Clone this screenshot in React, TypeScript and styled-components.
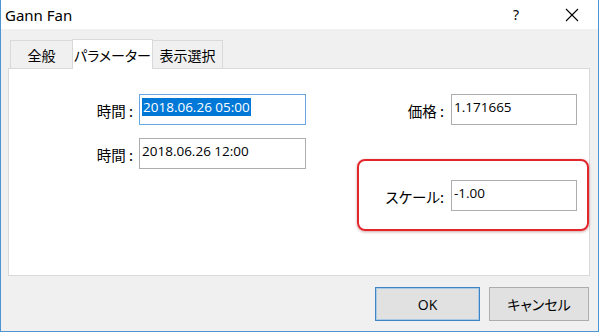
import React from 'react';
import styled, { createGlobalStyle } from 'styled-components';

const GlobalStyle = createGlobalStyle`
  html, body {
    margin: 0;
    padding: 0;
    background: #ffffff;
  }

  body {
    font-family: 'Noto Sans', 'Noto Sans CJK JP', sans-serif;
    color: #000;
  }
`;

// Styles
const Window = styled.div`
  box-sizing: border-box;
  width: 599px;
  height: 332px;
  border: 1px solid #4d94d4;
  border-top: none;
  background: #f0f0f0;
  display: flex;
  flex-direction: column;
`;

const TitleBar = styled.div`
  height: 29px;
  background: #fff;
  display: flex;
  align-items: center;
  padding-left: 4px;
  font-size: 15px;

  .title {
    flex: 1;
  }

  .help {
    width: 20px;
    margin-right: 36px;
    font-size: 14px;
    text-align: center;
  }

  .close {
    width: 20px;
    margin-right: 16px;
    display: flex;
    justify-content: center;
  }
`;

const Body = styled.div`
  padding: 10px 0 0 7px;
  display: flex;
  flex-direction: column;
`;

const TabStrip = styled.div`
  display: flex;
  align-items: flex-end;
  height: 29px;
  padding-left: 2px;
`;

const Tab = styled.div<{ $active?: boolean }>`
  box-sizing: border-box;
  height: ${(p) => (p.$active ? '30px' : '28px')};
  width: ${(p) => (p.$active ? '81px' : '71px')};
  display: flex;
  align-items: center;
  justify-content: center;
  font-family: 'Noto Sans CJK JP', sans-serif;
  font-feature-settings: 'palt';
  font-size: 14px;
  background: ${(p) => (p.$active ? '#fff' : '#f0f0f0')};
  border: 1px solid #d9d9d9;
  border-bottom: none;
  margin-bottom: ${(p) => (p.$active ? '-1px' : '0')};
  position: relative;
  z-index: ${(p) => (p.$active ? 1 : 0)};

  &:first-child {
    width: 63px;
  }

  & + & {
    margin-left: -1px;
  }
`;

const Panel = styled.div`
  box-sizing: border-box;
  width: 582px;
  height: 208px;
  background: #fff;
  border: 1px solid #d9d9d9;
  display: flex;
  padding-top: 25px;
`;

const LeftCol = styled.div`
  display: flex;
  flex-direction: column;
  gap: 13px;
`;

const RightCol = styled.div`
  width: 232px;
  margin-left: 51px;
  display: flex;
  flex-direction: column;
`;

const Field = styled.div<{ $labelWidth?: number }>`
  display: flex;
  align-items: center;
  justify-content: flex-end;
  gap: ${(p) => (p.$labelWidth ? '6px' : '7px')};

  .label {
    width: ${(p) => (p.$labelWidth ? `${p.$labelWidth}px` : 'auto')};
    text-align: right;
    font-family: 'Noto Sans CJK JP', sans-serif;
    font-feature-settings: 'palt';
    font-size: 14.5px;
    white-space: nowrap;
    margin-top: 2px;
  }
`;

const Input = styled.div<{ $width: number; $focused?: boolean }>`
  box-sizing: border-box;
  width: ${(p) => p.$width}px;
  height: 31px;
  border: 1px solid ${(p) => (p.$focused ? '#6aa6e0' : '#adadad')};
  background: #fff;
  padding: 2px 2px;
  font-family: 'Open Sans', 'Noto Sans', sans-serif;
  font-size: 13.5px;
  line-height: 20px;
  white-space: nowrap;

  .sel {
    background: #0078d7;
    color: #fff;
    padding: 0 1px;
  }
`;

const PriceRow = styled(Field)`
  padding-right: 12px;
`;

const Highlight = styled.div`
  box-sizing: border-box;
  margin-top: 34px;
  height: 72px;
  border: 2px solid #e3262b;
  border-radius: 8px;
  box-shadow: 0 1px 3px rgba(120, 0, 0, 0.35);
  display: flex;
  justify-content: flex-end;
  align-items: flex-start;
  padding: 19px 10px 0 0;
`;

const Footer = styled.div`
  display: flex;
  justify-content: flex-end;
  gap: 9px;
  padding: 11px 9px 0 0;
`;

const Button = styled.div<{ $default?: boolean }>`
  box-sizing: border-box;
  width: ${(p) => (p.$default ? '105px' : '100px')};
  height: 34px;
  display: flex;
  align-items: center;
  justify-content: center;
  background: #e1e1e1;
  border: 1px solid ${(p) => (p.$default ? '#3d85c6' : '#adadad')};
  box-shadow: ${(p) => (p.$default ? 'inset 0 0 0 1px #a9c9e6' : 'none')};
  font-family: 'Open Sans', 'Noto Sans CJK JP', sans-serif;
  font-feature-settings: 'palt';
  font-size: 14px;
`;

const App: React.FC = () => {
  return (
    <>
      <GlobalStyle />
      <Window>
        <TitleBar>
          <span className="title">Gann Fan</span>
          <span className="help">?</span>
          <span className="close">
            <svg width="14" height="14" viewBox="0 0 14 14">
              <path d="M1 1 L13 13 M13 1 L1 13" stroke="#000" strokeWidth="1.1" />
            </svg>
          </span>
        </TitleBar>
        <Body>
          <TabStrip>
            <Tab>全般</Tab>
            <Tab $active>パラメーター</Tab>
            <Tab>表示選択</Tab>
          </TabStrip>
          <Panel>
            <LeftCol>
              <Field $labelWidth={124}>
                <span className="label">時間 :</span>
                <Input $width={167} $focused>
                  <span className="sel">2018.06.26 05:00</span>
                </Input>
              </Field>
              <Field $labelWidth={124}>
                <span className="label">時間 :</span>
                <Input $width={167}>2018.06.26 12:00</Input>
              </Field>
            </LeftCol>
            <RightCol>
              <PriceRow>
                <span className="label">価格 :</span>
                <Input $width={126}>1.171665</Input>
              </PriceRow>
              <Highlight>
                <Field>
                  <span className="label">スケール:</span>
                  <Input $width={126}>-1.00</Input>
                </Field>
              </Highlight>
            </RightCol>
          </Panel>
          <Footer>
            <Button $default>OK</Button>
            <Button>キャンセル</Button>
          </Footer>
        </Body>
      </Window>
    </>
  );
};

export default App;
